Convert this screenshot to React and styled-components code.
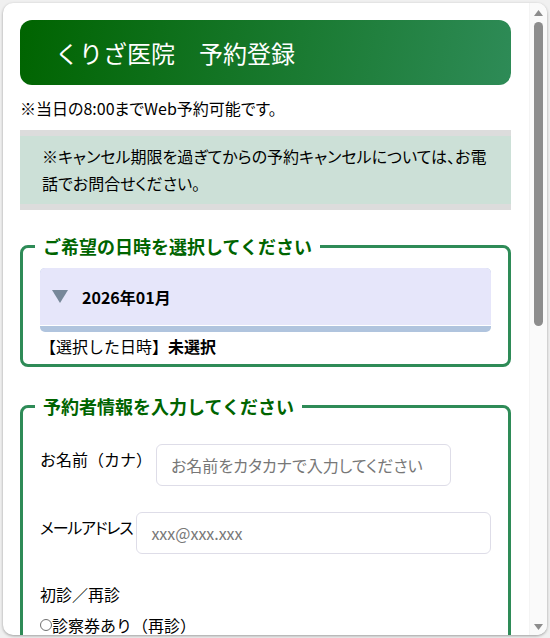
import styled, { createGlobalStyle } from 'styled-components'

const green = '#2e8b57'
const darkGreen = '#006400'

const GlobalStyle = createGlobalStyle`
  html, body {
    margin: 0;
    background: #f0f0f0;
  }
  body {
    font-family: 'Noto Sans CJK JP', 'Noto Sans', sans-serif;
    color: #000;
  }
`

const Window = styled.div`
  margin: 3px;
  width: 544px;
  height: 632px;
  display: flex;
  background: #fff;
  border-radius: 10px;
  overflow: hidden;
  box-shadow: 0 1px 3px rgba(0, 0, 0, 0.35);
`

const Viewport = styled.div`
  flex: 1;
  min-width: 0;
  overflow: hidden;
`

const Rail = styled.div`
  flex: none;
  width: 18px;
  display: flex;
  flex-direction: column;
  align-items: center;
  background: #fafafa;
  border-left: 1px solid #f4f4f4;
  box-sizing: border-box;
`

const RailButton = styled.div`
  height: 17px;
  width: 100%;
  display: flex;
  align-items: center;
  justify-content: center;
  padding-top: ${(p) => (p.$down ? 0 : 2)}px;
  box-sizing: border-box;
`

const Thumb = styled.div`
  margin-top: 2px;
  width: 9px;
  height: 304px;
  border-radius: 5px;
  background: #8d8d8d;
`

const RailSpace = styled.div`
  flex: 1;
`

const Main = styled.main`
  padding: 17px 18px 40px 17px;
  font-feature-settings: 'palt';
`

const Title = styled.h1`
  margin: 0;
  height: 65px;
  display: flex;
  align-items: center;
  padding-left: 35px;
  font-size: 24px;
  font-weight: 400;
  color: #fff;
  border-radius: 12px;
  background: linear-gradient(100deg, ${darkGreen}, ${green});
  font-feature-settings: normal;
`

const Lead = styled.p`
  margin: 10px 0 9px;
  font-size: 16px;
  line-height: 26px;
`

const Notice = styled.div`
  background: #cce0d7;
  border-top: 6px solid #dcdcdc;
  border-bottom: 6px solid #dcdcdc;
  padding: 7px 22px 7px 22px;
  font-size: 16px;
  line-height: 27px;
`

const Fieldset = styled.fieldset`
  margin: ${(p) => p.$gap}px 0 0;
  padding: ${(p) => p.$top}px 17px ${(p) => p.$bottom}px 17px;
  border: 3px solid ${green};
  border-radius: 8px;
  min-width: 0;
`

const Legend = styled.legend`
  margin-left: -5px;
  padding: 0 8px;
  font-size: 18px;
  line-height: 28px;
  font-weight: 700;
  color: ${darkGreen};
  font-feature-settings: normal;
`

const Month = styled.div`
  background: #b0c4de;
  border-radius: 5px;
  padding-bottom: 6px;
`

const MonthHead = styled.div`
  height: 57px;
  display: flex;
  align-items: center;
  gap: 14px;
  padding-left: 12px;
  background: #e6e6fa;
  border-bottom: 1px solid #fff;
  border-radius: 5px 5px 0 0;
  font-size: 16px;
  font-weight: 700;
`

const Selected = styled.div`
  margin-top: 2px;
  font-size: 16px;
  line-height: 24px;
  font-feature-settings: normal;

  b {
    font-weight: 700;
  }
`

const Row = styled.div`
  display: flex;
  align-items: flex-start;
  gap: 4px;
  margin-top: ${(p) => p.$gap}px;
`

const Label = styled.label`
  flex: none;
  padding-top: 3px;
  font-size: 16px;
  line-height: 24px;
  white-space: nowrap;
  font-feature-settings: ${(p) => (p.$narrow ? "'palt'" : 'normal')};
  letter-spacing: ${(p) => (p.$narrow ? '-1.2px' : 'normal')};
`

const Input = styled.input`
  box-sizing: border-box;
  height: 42px;
  width: ${(p) => (p.$w ? `${p.$w}px` : 'auto')};
  flex: ${(p) => (p.$w ? 'none' : '1')};
  min-width: 0;
  padding: 0 14px;
  border: 1px solid #dedde8;
  border-radius: 6px;
  font-family: inherit;
  font-size: 16px;
  font-feature-settings: 'palt';
  background: #fff;

  &::placeholder {
    color: #777;
  }
`

const GroupTitle = styled.div`
  margin-top: 28px;
  font-size: 16px;
  line-height: 24px;
  font-feature-settings: normal;
`

const Choice = styled.label`
  display: flex;
  align-items: center;
  font-size: 16px;
  line-height: 24px;
  margin-top: ${(p) => p.$gap || 0}px;
  font-feature-settings: normal;
`

const Radio = styled.input.attrs({ type: 'radio' })`
  appearance: none;
  margin: 0;
  width: 12px;
  height: 12px;
  box-sizing: border-box;
  border: 1.5px solid #6f6f6f;
  border-radius: 50%;
  background: #fff;
`

const Submit = styled.button`
  display: block;
  width: 100%;
  margin-top: 28px;
  height: 52px;
  border: none;
  border-radius: 10px;
  background: linear-gradient(100deg, ${darkGreen}, ${green});
  color: #fff;
  font-family: inherit;
  font-size: 18px;
  font-weight: 700;
`

function Triangle() {
  return (
    <svg width="16" height="13" viewBox="0 0 16 13">
      <path d="M0 0H16L8 13z" fill="#778899" />
    </svg>
  )
}

function Arrow({ down }) {
  return (
    <svg width="9" height="6" viewBox="0 0 9 6">
      <path d={down ? 'M0 0H9L4.5 6z' : 'M4.5 0L9 6H0z'} fill="#8d8d8d" />
    </svg>
  )
}

export default function App() {
  return (
    <>
      <GlobalStyle />
      <Window>
        <Viewport>
          <Main>
            <Title>くりざ医院　予約登録</Title>
            <Lead>※当日の8:00までWeb予約可能です。</Lead>
            <Notice>
              ※キャンセル期限を過ぎてからの予約キャンセルについては、お電話でお問合せください。
            </Notice>

            <Fieldset $gap={22} $top={8} $bottom={6}>
              <Legend>ご希望の日時を選択してください</Legend>
              <Month>
                <MonthHead>
                  <Triangle />
                  2026年01月
                </MonthHead>
              </Month>
              <Selected>
                【選択した日時】<b>未選択</b>
              </Selected>
            </Fieldset>

            <Fieldset $gap={25} $top={0} $bottom={24}>
              <Legend>予約者情報を入力してください</Legend>
              <Row $gap={24}>
                <Label>お名前（カナ）</Label>
                <Input $w={295} placeholder="お名前をカタカナで入力してください" />
              </Row>
              <Row $gap={26}>
                <Label $narrow>メールアドレス</Label>
                <Input type="email" placeholder="xxx@xxx.xxx" />
              </Row>
              <GroupTitle>初診／再診</GroupTitle>
              <Choice $gap={7}>
                <Radio name="visit" />
                診察券あり（再診）
              </Choice>
              <Choice>
                <Radio name="visit" />
                診察券なし（初診）
              </Choice>
              <Row $gap={26}>
                <Label>電話番号</Label>
                <Input type="tel" placeholder="09012345678" />
              </Row>
            </Fieldset>

            <Submit>予約内容を確認する</Submit>
          </Main>
        </Viewport>
        <Rail>
          <RailButton>
            <Arrow />
          </RailButton>
          <Thumb />
          <RailSpace />
          <RailButton $down>
            <Arrow down />
          </RailButton>
        </Rail>
      </Window>
    </>
  )
}
